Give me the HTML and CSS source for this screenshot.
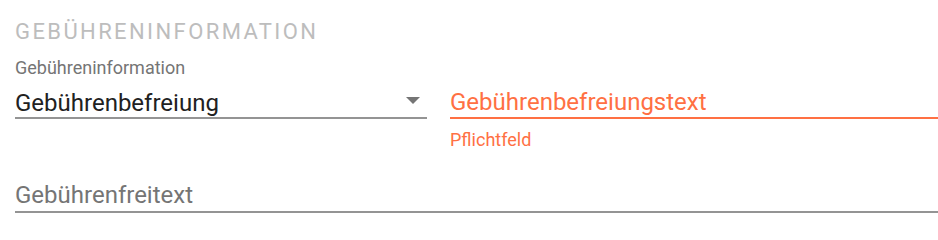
FILE: index.html
```html
<!DOCTYPE html>
<html lang="de">
<head>
<meta charset="utf-8">
<link rel="stylesheet" href="styles.css">
</head>
<body>
<section class="panel">
  <h2 class="title">Gebühreninformation</h2>
  <div class="row">
    <div class="field select">
      <div class="label">Gebühreninformation</div>
      <div class="control">
        <span class="value">Gebührenbefreiung</span>
        <svg class="arrow" width="14" height="7" viewBox="0 0 14 7"><polygon points="0,0 14,0 7,7" fill="#757575"/></svg>
      </div>
    </div>
    <div class="field error">
      <div class="control">
        <span class="placeholder">Gebührenbefreiungstext</span>
      </div>
      <div class="hint">Pflichtfeld</div>
    </div>
  </div>
  <div class="field wide">
    <div class="control">
      <span class="placeholder">Gebührenfreitext</span>
    </div>
  </div>
</section>
</body>
</html>
```
FILE: styles.css
```css
html, body {
  margin: 0;
  padding: 0;
  background: #ffffff;
}
body {
  font-family: Roboto, "Liberation Sans", sans-serif;
}
.panel {
  padding: 17px 0 0 15px;
}
.title {
  margin: 0;
  font-size: 22px;
  font-weight: 400;
  text-transform: uppercase;
  letter-spacing: 2.4px;
  color: #bdbdbd;
  line-height: 30px;
}
.row {
  display: grid;
  grid-template-columns: 412px 1fr;
  column-gap: 23px;
  margin-top: 11px;
}
.label {
  font-size: 18px;
  color: #757575;
  line-height: 20px;
}
.control {
  display: flex;
  justify-content: space-between;
  padding-top: 11px;
  line-height: 28px;
  border-bottom: 2px solid #949494;
  font-size: 24px;
}
.value {
  color: #212121;
}
.arrow {
  margin: 8px 7px 0 0;
}
.error .control {
  border-bottom-color: #ff7043;
  margin-top: 20px;
  padding-top: 10px;
  padding-bottom: 1px;
}
.error .placeholder {
  color: #ff7043;
}
.hint {
  font-size: 18px;
  line-height: 20px;
  color: #ff7043;
  margin-top: 11px;
}
.placeholder {
  color: #757575;
}
.wide {
  margin-top: 20px;
}
.wide .control {
  padding-bottom: 2px;
}
```
